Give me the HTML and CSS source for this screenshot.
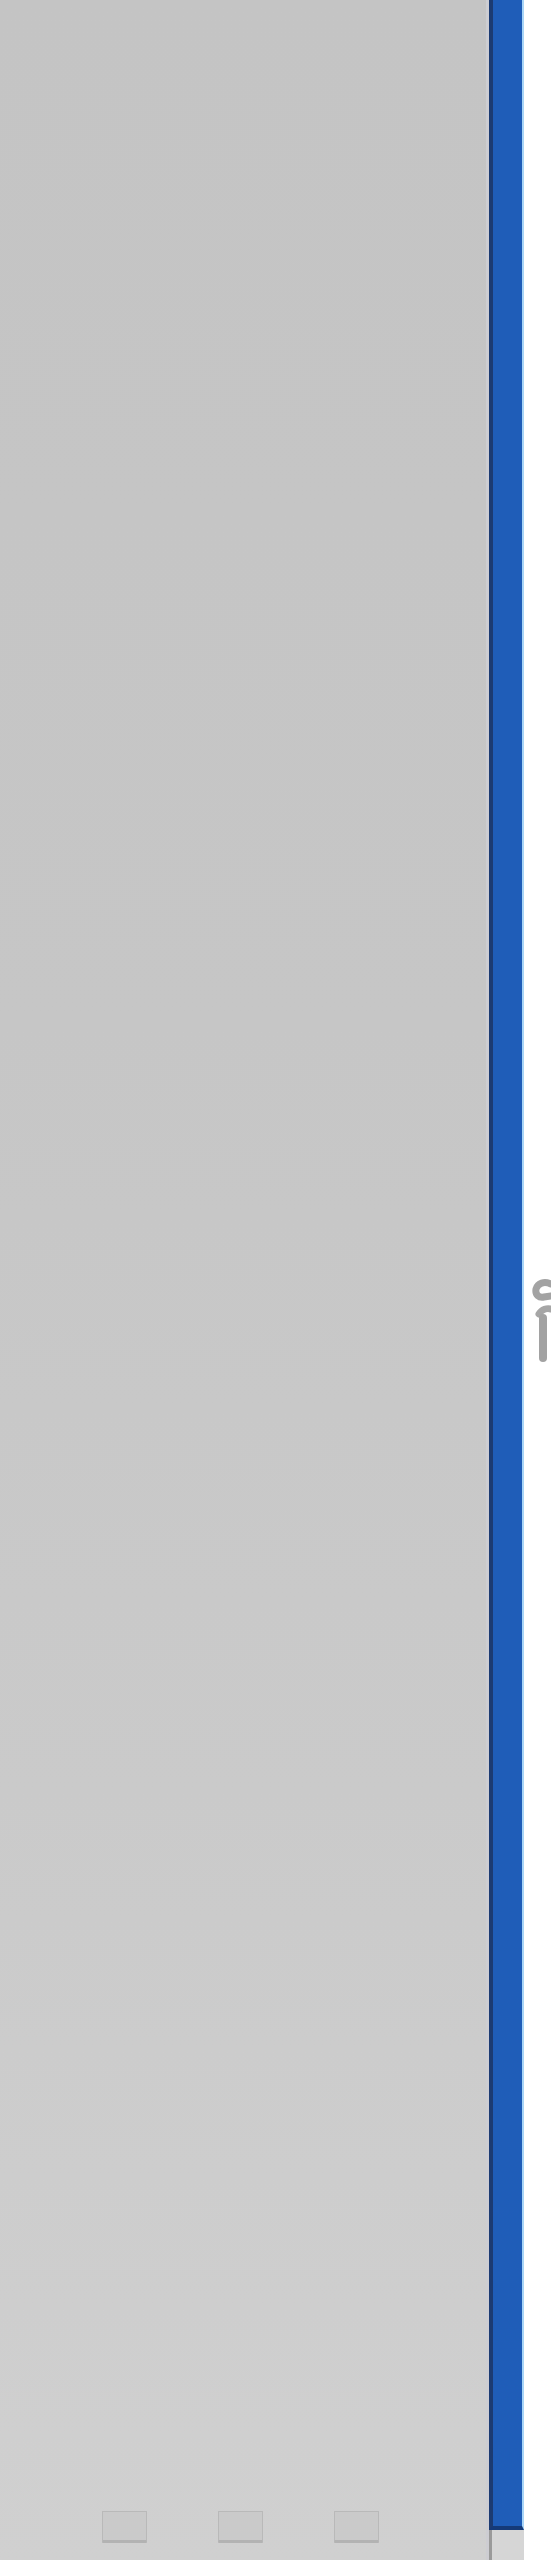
FILE: index.html
```html
<!DOCTYPE html>
<html lang="en">
<head>
<meta charset="utf-8">
<title>Panel</title>
<link rel="stylesheet" href="styles.css">
</head>
<body>
<div class="screen">
  <div class="panel">
    <div class="dock">
      <div class="slot"></div>
      <div class="slot"></div>
      <div class="slot"></div>
    </div>
  </div>
  <div class="scrollbar">
    <div class="thumb"></div>
    <div class="cap"></div>
  </div>
  <div class="side">
    <svg class="side-icon" width="20" height="86" viewBox="0 0 20 86">
      <path d="M20 8 C13 5 7 7 5 13 C4 19 8 22 13 21 L20 20" fill="none" stroke="#a3a3a3" stroke-width="7" stroke-linecap="round"/>
      <path d="M8 38 C11 33 16 32 20 33" fill="none" stroke="#a6a6a6" stroke-width="7" stroke-linecap="round"/>
      <path d="M12 42 L12 82" stroke="#a2a2a2" stroke-width="8" stroke-linecap="round"/>
    </svg>
  </div>
</div>
</body>
</html>
```
FILE: styles.css
```css
html, body {
  margin: 0;
  padding: 0;
  background: #ffffff;
}
.screen {
  display: flex;
  width: 551px;
  height: 2560px;
  overflow: hidden;
}
.panel {
  width: 487px;
  border-right: 3px solid #cdcdd2;
  background: linear-gradient(to bottom, #c4c4c4 0%, #c6c6c6 40%, #cacaca 70%, #d0d0d0 100%);
  display: flex;
  flex-direction: column;
  justify-content: flex-end;
}
.dock {
  display: flex;
  gap: 71px;
  padding: 0 0 17px 102px;
}
.slot {
  width: 43px;
  height: 28px;
  border: 1px solid #b9b9b9;
  border-bottom: 3px solid #b3b3b3;
  background: #cacaca;
  border-radius: 1px;
}
.scrollbar {
  width: 35px;
  display: flex;
  flex-direction: column;
}
.thumb {
  flex: 1;
  background: #1f5db8;
  border-left: 4px solid #1c3b72;
  border-right: 2px solid #a9d5f7;
  border-bottom: 4px solid #153a78;
}
.cap {
  height: 30px;
  background: #d6d6d6;
  border-left: 3px solid #9a9a9a;
}
.side {
  flex: 1;
  background: #ffffff;
  padding: 1276px 0 0 7px;
}
.side-icon {
  display: block;
}
```
